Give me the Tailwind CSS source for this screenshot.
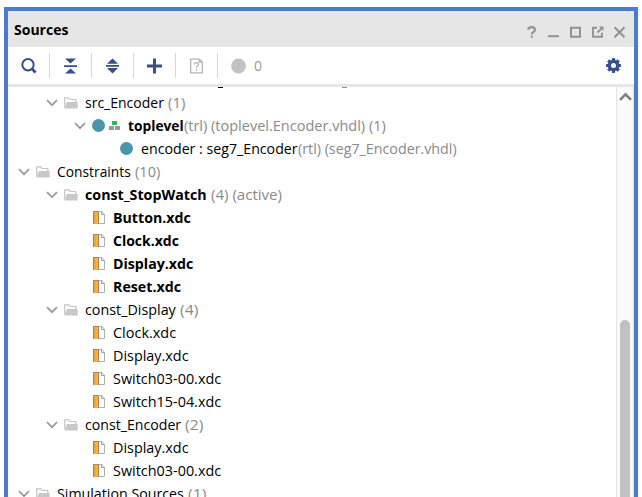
<!DOCTYPE html>
<html lang="en">
<head>
<meta charset="utf-8">
<title>Sources</title>
<script src="https://cdn.jsdelivr.net/npm/@tailwindcss/browser@4"></script>
</head>
<body class="h-[497px] overflow-hidden bg-white pl-1 pr-1 pt-[7px] font-['Open_Sans','Noto_Sans',sans-serif] text-[14px] text-black">
<svg class="hidden">
  <symbol id="chev" viewBox="0 0 12 8"><path d="M1 1.2 6 6.2 11 1.2" fill="none" stroke="#9b9b9b" stroke-width="1.7"/></symbol>
  <symbol id="folder" viewBox="0 0 14 12"><path d="M.7 10.5V.8H5l1.2 1.7h5.6V5" fill="none" stroke="#c4c4c4" stroke-width="1.2"/><path d="M2.8 5H13.6v6.5H.6z" fill="#c8c8c8"/></symbol>
  <symbol id="file" viewBox="0 0 12 13"><path d="M5.5.5h3.3l2.7 2.7v9.3h-6z" fill="#fff" stroke="#b0b0b0"/><path d="M8.5.5v3h3" fill="none" stroke="#a0a0a0"/><path d="M0 0H5v13H0z" fill="#fdae3c"/><path d="M.5 13V.5H5.5V13" fill="none" stroke="#a08468"/><path d="M1 3h1.5M1 5h1.5M1 7h1.5M1 9h1.5M1 11h1.5" stroke="#b98a45" stroke-width=".6"/></symbol>
  <symbol id="hier" viewBox="0 0 11 9"><path d="M3 0h5v4H3z" fill="#35b45a"/><path d="M0 5h5v4H0zM6 5H11v4H6z" fill="#999"/></symbol>
</svg>
<div class="flex h-[500px] w-[634px] flex-col border-4 border-[#4a7bd0] bg-white">
  <header class="flex h-9 shrink-0 items-center justify-between bg-[#e6e6e6] pl-1.5 pr-[6px]">
    <span class="fit inline-block origin-left font-bold" data-w="54">Sources</span>
    <svg class="mt-[5px] h-4 w-[102px]" viewBox="0 0 102 16" fill="none" stroke="#929292">
      <path d="M2.2 5.8Q2.2 3.1 5.8 3.1 9 3.1 9 5.8 9 7.3 7.2 8.1 5.8 8.8 5.8 10.4" stroke-width="2.1"/><path d="M4.8 11.7h2.1v2H4.8z" fill="#929292" stroke="none"/>
      <path d="M22 12.2h11" stroke-width="2"/>
      <path d="M45 3.7h9v9h-9z" stroke-width="2"/>
      <path d="M71 3.8h-4v9h9v-4M71.5 8.5l4-4" stroke-width="1.9"/><path d="M73 2.5h4.5V7z" fill="#929292" stroke="none"/>
      <path d="M88.5 3.2l10 10M98.5 3.2l-10 10" stroke-width="2"/>
    </svg>
  </header>
  <div class="flex h-10 shrink-0 items-center border-b-[3px] border-[#e6e6e6] pl-3 pr-[13px]">
    <svg class="ml-px h-4 w-4" viewBox="0 0 16 16" fill="none" stroke="#34518a"><circle cx="7" cy="6.8" r="5.7" stroke-width="2"/><path d="M11 10.8l3.6 3.6" stroke-width="2.8"/></svg>
    <i class="ml-[12px] h-[25px] w-px bg-[#d6d6d6]"></i>
    <svg class="ml-[14px] h-4 w-[13px]" viewBox="0 0 13 16" fill="#34518a"><path d="M1 .5h11L6.5 5.5zM0 7.3h13v1.6H0zM6.5 10.5l5.5 5H1z"/></svg>
    <i class="ml-[14px] h-[25px] w-px bg-[#d6d6d6]"></i>
    <svg class="ml-[14px] h-4 w-[13px]" viewBox="0 0 13 16" fill="#34518a"><path d="M6.5.5 12 5.8H1zM0 7h13v1.7H0zM1 10h11l-5.5 5.5z"/></svg>
    <i class="ml-[14px] h-[25px] w-px bg-[#d6d6d6]"></i>
    <svg class="ml-[13px] h-4 w-[15px]" viewBox="0 0 15 16" fill="#34518a"><path d="M6 .5h3v6h6v3H9v6H6v-6H0v-3h6z"/></svg>
    <i class="ml-[13px] h-[25px] w-px bg-[#d6d6d6]"></i>
    <svg class="ml-[14px] h-4 w-[13px]" viewBox="0 0 13 16" fill="none" stroke="#b4b4b4" stroke-width="1.3"><path d="M.7 1.2h8.8l2.8 2.8v10.8H.7zM9.3 1.2v3h3"/><path d="M4.3 6.5q0-1.8 2.1-1.8 2 0 2 1.7 0 1-1.1 1.6-.9.5-.9 1.8M6.4 11v1.6"/></svg>
    <i class="ml-[14px] h-[25px] w-px bg-[#d6d6d6]"></i>
    <svg class="ml-[13px] h-4 w-[15px]" viewBox="0 0 15 16"><circle cx="7.5" cy="8" r="7.4" fill="#c2c2c2"/><path d="M7.5 3.5v5.8M7.5 10.7v1.7" stroke="#b8b8b8" stroke-width="1.2"/></svg>
    <span class="ml-2 text-[14px] text-[#9a9a9a]">0</span>
    <svg class="ml-auto h-[15px] w-[15px]" viewBox="-7.5 -7.5 15 15"><g fill="#34518a"><circle r="5.8"/><path id="t" d="M-1.6-7.4h3.2v14.8h-3.2z"/><use href="#t" transform="rotate(45)"/><use href="#t" transform="rotate(90)"/><use href="#t" transform="rotate(135)"/></g><circle r="2.5" fill="#fff"/></svg>
  </div>
  <div class="flex min-h-0 flex-1">
    <main class="relative min-w-0 flex-1 overflow-hidden pt-1">
      <i class="absolute left-[210px] top-0 h-px w-[5px] bg-black"></i>
      <i class="absolute left-[334px] top-0 h-px w-[5px] bg-[#929292]"></i>
      <div id="tree"></div>
    </main>
    <aside class="flex w-[18px] shrink-0 flex-col items-center border-x border-[#e4e4e4] bg-[#fafafa]">
      <svg class="ml-px mt-[5px] h-[9px] w-[13px] shrink-0" viewBox="0 0 13 9"><path d="M1 7.8 6.5 2.3 12 7.8" fill="none" stroke="#808080" stroke-width="2.6"/></svg>
      <div class="mt-[219px] h-[200px] w-[10px] shrink-0 rounded-full bg-[#c1c1c1]"></div>
    </aside>
  </div>
</div>

<template id="branch"><div class="flex h-[23px] items-center whitespace-pre"><svg class="h-2 w-3 shrink-0"><use href="#chev"/></svg><svg class="ml-[6px] mr-[7px] h-3 w-[14px] shrink-0"><use href="#folder"/></svg></div></template>
<template id="leaf"><div class="flex h-[23px] items-center whitespace-pre"><svg class="ml-[85px] mr-2 h-[13px] w-3 shrink-0"><use href="#file"/></svg></div></template>
<template id="top"><div class="flex h-[23px] items-center whitespace-pre"><svg class="h-2 w-3 shrink-0"><use href="#chev"/></svg><i class="ml-[6px] h-[13px] w-[13px] shrink-0 rounded-full bg-[#4a94ac]"></i><svg class="ml-[4px] mr-[8px] h-[9px] w-[11px] shrink-0"><use href="#hier"/></svg></div></template>
<template id="inst"><div class="flex h-[23px] items-center whitespace-pre"><i class="mr-2 h-[13px] w-[13px] shrink-0 rounded-full bg-[#4a94ac]"></i></div></template>
<script>
// [row type, indent class, label, label width, bold, gap class, note, note width]
const rows = [
  ['branch','pl-[38px]','src_Encoder',79,0,'ml-1','(1)',17],
  ['top','pl-[66px]','toplevel',56,1,'ml-0','(trl) (toplevel.Encoder.vhdl) (1)',202],
  ['inst','pl-[112px]','encoder : seg7_Encoder',157,0,'ml-0','(rtl) (seg7_Encoder.vhdl)',159],
  ['branch','pl-[10px]','Constraints',74,0,'ml-1','(10)',25],
  ['branch','pl-[38px]','const_StopWatch',122,1,'ml-1','(4) (active)',71],
  ['leaf','pl-0','Button.xdc',78,1],
  ['leaf','pl-0','Clock.xdc',66,1],
  ['leaf','pl-0','Display.xdc',80,1],
  ['leaf','pl-0','Reset.xdc',68,1],
  ['branch','pl-[38px]','const_Display',91,0,'ml-1','(4)',18],
  ['leaf','pl-0','Clock.xdc',63],
  ['leaf','pl-0','Display.xdc',76],
  ['leaf','pl-0','Switch03-00.xdc',108],
  ['leaf','pl-0','Switch15-04.xdc',108],
  ['branch','pl-[38px]','const_Encoder',96,0,'ml-1','(2)',18],
  ['leaf','pl-0','Display.xdc',76],
  ['leaf','pl-0','Switch03-00.xdc',108],
  ['branch','pl-[10px]','Simulation Sources',127,0,'ml-1','(1)',18]
];
const tree = document.getElementById('tree');
function label(text, width, cls) {
  const box = document.createElement('span');
  box.className = 'block shrink-0 ' + cls;
  box.style.width = width + 'px';
  const s = document.createElement('span');
  s.className = 'fit inline-block origin-left';
  s.dataset.w = width;
  s.textContent = text;
  box.append(s);
  return box;
}
for (const [type, indent, name, w, bold, gap, note, nw] of rows) {
  const row = document.getElementById(type).content.firstElementChild.cloneNode(true);
  row.classList.add(indent);
  row.append(label(name, w, bold ? 'font-bold' : ''));
  if (note) row.append(label(note, nw, 'text-[#8a8a8a] ' + gap));
  tree.append(row);
}
function fit() {
  for (const s of document.querySelectorAll('.fit')) {
    s.style.transform = 'scaleX(' + s.dataset.w / s.offsetWidth + ')';
  }
}
fit();
addEventListener('load', fit);
document.fonts.ready.then(fit);
</script>
</body>
</html>
